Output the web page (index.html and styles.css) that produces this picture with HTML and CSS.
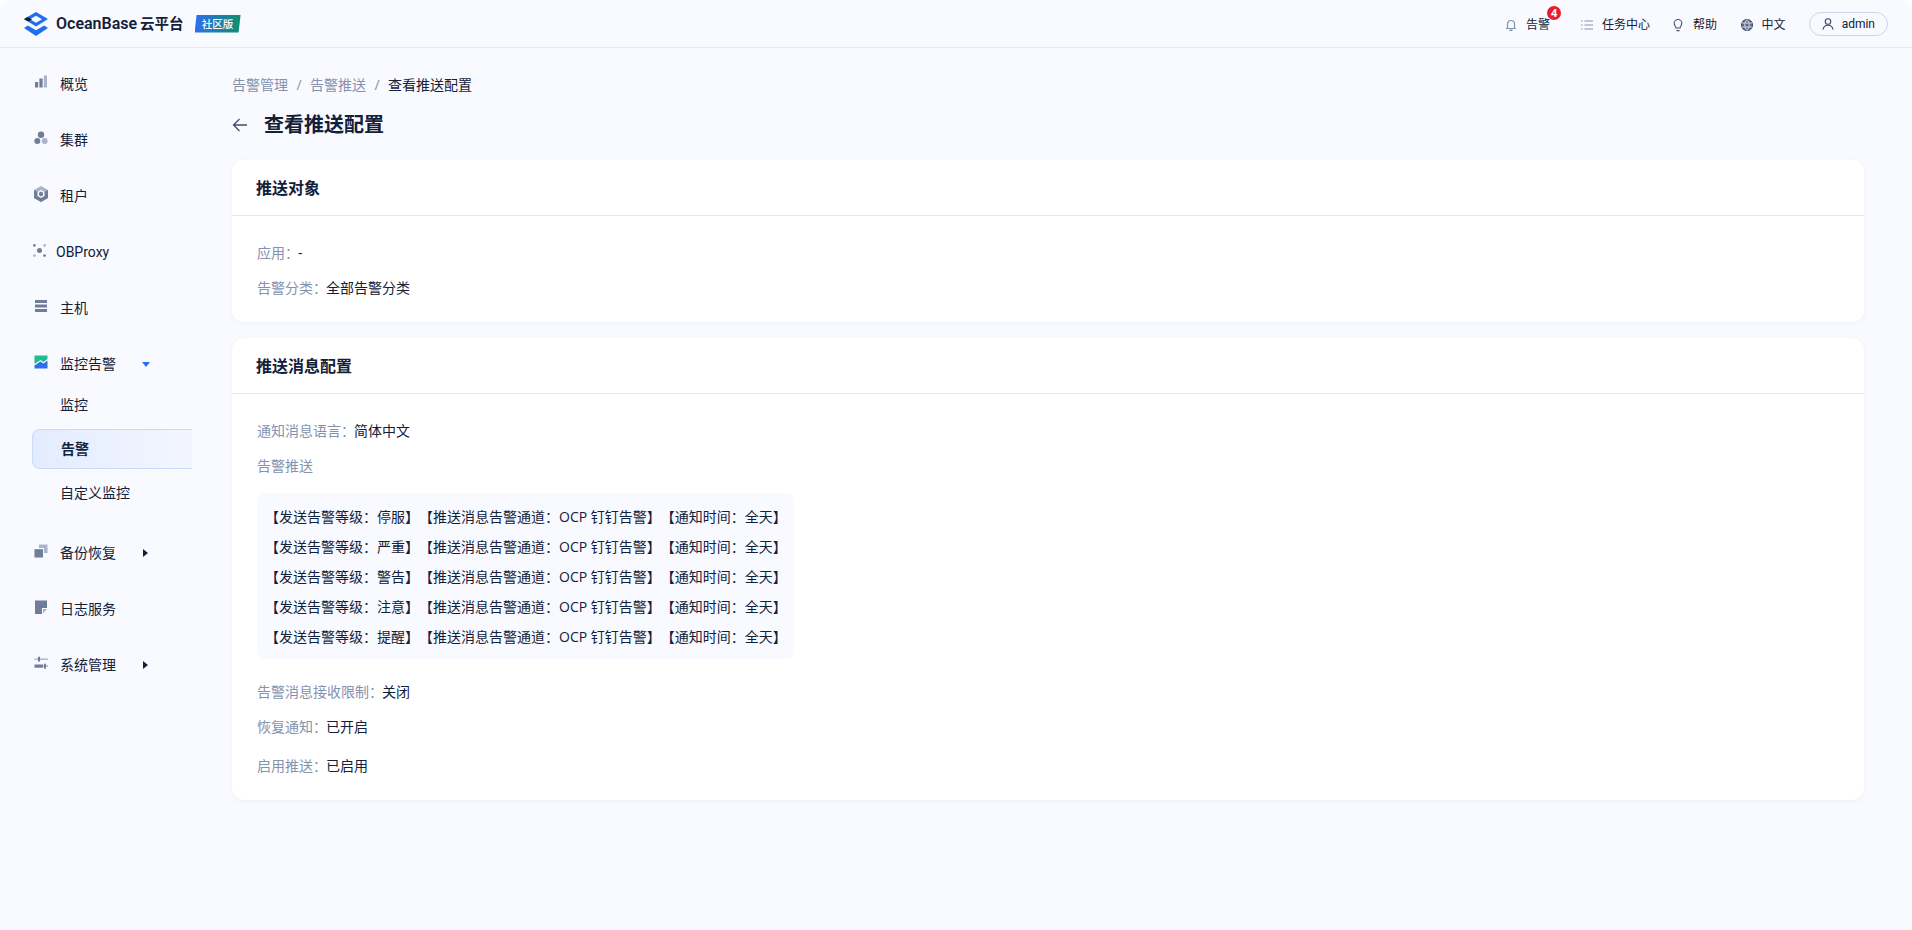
FILE: index.html
```html
<!DOCTYPE html>
<html lang="zh-CN">
<head>
<meta charset="utf-8">
<title>查看推送配置</title>
<link rel="stylesheet" href="styles.css">
</head>
<body>
<div class="app">
  <header class="topbar">
    <div class="brand">
      <svg class="logo" viewBox="0 0 24 24"><path fill="#1f6ff0" fill-rule="evenodd" d="M12 0 24 7 12 14.500 0 7ZM12 3.800 6 7.200 12 10.800 18 7.200Z"/><path fill="#0d1b33" d="M0 7.200 3.500 5 8 7.200 4.500 9.600Z"/><path fill="#1f6ff0" d="M0 16 3.800 13.500 12 18.200 20.200 13.500 24 16 12 24Z"/></svg>
      <span class="brand-name">OceanBase</span><span class="brand-cn">云平台</span>
      <span class="brand-tag">社区版</span>
    </div>
    <nav class="topnav">
      <a class="topnav-item topnav-alert">
        <svg class="ti" viewBox="0 0 14 14"><path fill="none" stroke="#8592ad" stroke-width="1.200" d="M3.500 10.500V6a3.500 3.500 0 0 1 7 0v4.500M2 10.500h10"/><path fill="#8592ad" d="M5.500 11.500h3V13h-3z"/></svg>
        <span>告警</span><b class="badge">4</b>
      </a>
      <a class="topnav-item topnav-tasks">
        <svg class="ti" viewBox="0 0 14 14"><path stroke="#8592ad" stroke-width="1" d="M1 3h1.600M4.400 3H13M1 7h1.600M4.400 7H13M1 11h1.600M4.400 11H13"/></svg>
        <span>任务中心</span>
      </a>
      <a class="topnav-item topnav-help">
        <svg class="ti" viewBox="0 0 14 14"><path fill="none" stroke="#3f4d68" stroke-width="1.100" d="M5 10c0-1.500-1.800-2.300-1.800-4.700a3.800 3.800 0 0 1 7.600 0C10.800 7.700 9 8.500 9 10ZM5.500 12.600h3"/></svg>
        <span>帮助</span>
      </a>
      <a class="topnav-item topnav-lang">
        <svg class="ti" viewBox="0 0 14 14"><circle cx="7" cy="7" r="5.600" fill="#5c6b8a" stroke="#3f4d68"/><path fill="none" stroke="#fff" stroke-width=".7" d="M1.500 5h11M1.500 9h11M7 1.500c-3 3.500-3 7.500 0 11M7 1.500c3 3.500 3 7.500 0 11"/></svg>
        <span>中文</span>
      </a>
      <a class="user-pill">
        <svg class="ti" viewBox="0 0 14 14"><circle cx="7" cy="4.500" r="2.800" fill="none" stroke="#3f4d68" stroke-width="1.100"/><path fill="none" stroke="#3f4d68" stroke-width="1.100" d="M2 12.800c.4-3 2.400-4.500 5-4.500s4.600 1.500 5 4.500"/></svg>
        <span>admin</span>
      </a>
    </nav>
  </header>

  <div class="body">
    <aside class="sidebar">
      <a class="menu-item">
        <svg class="mi" viewBox="0 0 14 14"><path fill="#6f7d99" d="M1 7h3.200v5.500H1z"/><path fill="#6f7d99" d="M5.400 3.500h3.200v9H5.400z"/><path fill="#aab4c8" d="M9.800 0.500H13v12H9.800z"/></svg>
        <span>概览</span>
      </a>
      <a class="menu-item">
        <svg class="mi" viewBox="0 0 14 14"><circle cx="7" cy="3.800" r="3.200" fill="#6f7d99"/><circle cx="3.300" cy="10" r="3" fill="#6f7d99"/><circle cx="10.700" cy="10" r="3" fill="#aab4c8"/></svg>
        <span>集群</span>
      </a>
      <a class="menu-item">
        <svg class="mi mi-tall" viewBox="0 0 14 16" preserveAspectRatio="none"><path fill="#aab4c8" d="M7 0 14 4V12L7 16 0 12V4Z"/><path fill="#6f7d99" d="M0 4 7 8v8L0 12ZM14 4V12L7 16V8Z"/><path fill="#f8faff" d="M7 4 10.500 6V10L7 12 3.500 10V6Z"/><path fill="#6f7d99" d="M7 5.600 9 6.800V9.200L7 10.400 5 9.200V6.800Z"/></svg>
        <span>租户</span>
      </a>
      <a class="menu-item menu-item-proxy">
        <svg class="mi" viewBox="0 0 14 14"><circle cx="7" cy="7" r="2.700" fill="#6f7d99"/><circle cx="1.500" cy="1.500" r="1.400" fill="#6f7d99"/><circle cx="12.500" cy="1.500" r="1.400" fill="#aab4c8"/><circle cx="1.500" cy="12.500" r="1.400" fill="#aab4c8"/><circle cx="12.500" cy="12.500" r="1.400" fill="#6f7d99"/></svg>
        <span>OBProxy</span>
      </a>
      <a class="menu-item">
        <svg class="mi" viewBox="0 0 14 14"><path fill="#6f7d99" d="M1 1h12v3H1zM1 5.500h12v3H1zM1 10h12v3H1z"/></svg>
        <span>主机</span>
      </a>
      <a class="menu-item menu-item-open">
        <svg class="mi" viewBox="0 0 14 14"><path fill="#1fbf8a" d="M.5 .5h13v3.500L9.500 7 6.500 5 .5 9Z"/><path fill="#2f6fed" d="M.5 10.500 6.500 6.500 9.500 8.500 13.500 5.500V13.500H.5Z"/></svg>
        <span>监控告警</span>
        <i class="caret-down"></i>
      </a>
      <div class="submenu">
        <a class="sub-item">监控</a>
        <a class="sub-item sub-item-active">告警</a>
        <a class="sub-item">自定义监控</a>
      </div>
      <a class="menu-item">
        <svg class="mi" viewBox="0 0 14 14"><path fill="#aab4c8" d="M5 .5h8.500V9H10V4H5Z"/><path fill="#6f7d99" d="M.5 5.200h8.500v8.300H.5z"/></svg>
        <span>备份恢复</span>
        <i class="caret-right"></i>
      </a>
      <a class="menu-item">
        <svg class="mi" viewBox="0 0 14 14"><path fill="#6f7d99" d="M1 .5h12V8H8v6H1Z"/><path fill="#aab4c8" d="M9 9h4l-4 4.500Z"/></svg>
        <span>日志服务</span>
      </a>
      <a class="menu-item">
        <svg class="mi" viewBox="0 0 14 14"><path fill="#aab4c8" d="M.5 2.500H14v1.400H.5z"/><path fill="#6f7d99" d="M4 .8h2v4.800H4z"/><path fill="#6f7d99" d="M.5 8.500h8.500v3.200H.5z"/><path fill="#aab4c8" d="M9 9.300h5v1.500H9z"/><path fill="#6f7d99" d="M10 7.800h1.900v5H10z"/></svg>
        <span>系统管理</span>
        <i class="caret-right"></i>
      </a>
    </aside>

    <main class="content">
      <div class="crumbs">
        <a>告警管理</a><i>/</i><a>告警推送</a><i>/</i><span>查看推送配置</span>
      </div>
      <div class="page-head">
        <svg class="back" viewBox="0 0 16 16"><path fill="none" stroke="#3f4d68" stroke-width="1.300" d="M15 8H1.800M7.500 2 1.500 8l6 6"/></svg>
        <h1>查看推送配置</h1>
      </div>

      <section class="card card-target">
        <h2>推送对象</h2>
        <div class="card-body">
          <div class="field"><label>应用：</label><span>-</span></div>
          <div class="field"><label>告警分类：</label><span>全部告警分类</span></div>
        </div>
      </section>

      <section class="card card-message">
        <h2>推送消息配置</h2>
        <div class="card-body">
          <div class="field"><label>通知消息语言：</label><span>简体中文</span></div>
          <div class="field"><label>告警推送</label></div>
          <div class="rules">
            <div class="rule"><span>【发送告警等级：停服】</span><span>【推送消息告警通道：OCP 钉钉告警】</span><span>【通知时间：全天】</span></div>
            <div class="rule"><span>【发送告警等级：严重】</span><span>【推送消息告警通道：OCP 钉钉告警】</span><span>【通知时间：全天】</span></div>
            <div class="rule"><span>【发送告警等级：警告】</span><span>【推送消息告警通道：OCP 钉钉告警】</span><span>【通知时间：全天】</span></div>
            <div class="rule"><span>【发送告警等级：注意】</span><span>【推送消息告警通道：OCP 钉钉告警】</span><span>【通知时间：全天】</span></div>
            <div class="rule"><span>【发送告警等级：提醒】</span><span>【推送消息告警通道：OCP 钉钉告警】</span><span>【通知时间：全天】</span></div>
          </div>
          <div class="field"><label>告警消息接收限制：</label><span>关闭</span></div>
          <div class="field"><label>恢复通知：</label><span>已开启</span></div>
          <div class="field field-last"><label>启用推送：</label><span>已启用</span></div>
        </div>
      </section>
    </main>
  </div>
</div>
</body>
</html>
```
FILE: styles.css
```css
* { box-sizing: border-box; }
html, body { margin: 0; height: 100%; background: #fff; }
body {
  font-family: "Open Sans", "Noto Sans CJK SC", sans-serif;
  font-size: 14px;
  line-height: 20px;
  color: #132039;
  overflow: hidden;
}
a { color: inherit; text-decoration: none; }

.app { height: 930px; background: #f8faff; border-radius: 12px 12px 0 0; overflow: hidden; display: flex; flex-direction: column; }

.topbar {
  flex: none;
  height: 48px;
  border-bottom: 1px solid #e2e8f3;
  display: flex;
  align-items: center;
  justify-content: space-between;
  padding: 0 24px;
}
.brand { display: flex; align-items: center; }
.logo { width: 24px; height: 24px; margin-right: 8px; }
.brand-name { font-family: Roboto, sans-serif; font-size: 16px; font-weight: 600; line-height: 24px; }
.brand-cn { font-size: 14.500px; font-weight: 600; line-height: 24px; margin-left: 3px; }
.brand-tag {
  margin-left: 11px;
  width: 46px;
  height: 18px;
  font-size: 10.500px;
  line-height: 18px;
  font-weight: 500;
  color: #fff;
  text-align: center;
  background: linear-gradient(90deg, #2f6fed, #0e8f6e);
  clip-path: polygon(2px 0, 100% 0, calc(100% - 2px) 100%, 0 100%);
}

.topnav { display: flex; align-items: center; font-size: 12px; margin-top: 1px; }
.topnav-item { display: flex; align-items: center; position: relative; padding-top: 2px; }
.ti { width: 14px; height: 14px; flex: none; margin-right: 8px; }
.topnav-alert { margin-right: 30px; }
.topnav-tasks { margin-right: 21px; }
.topnav-help { margin-right: 22.500px; }
.topnav-lang { margin-right: 23px; }
.badge {
  position: absolute;
  right: -11px;
  top: -7.500px;
  width: 14px;
  height: 14px;
  border-radius: 50%;
  background: #eb1c2d;
  color: #fff;
  font-size: 11px;
  line-height: 14px;
  font-weight: 700;
  text-align: center;
}
.user-pill {
  display: flex;
  align-items: center;
  height: 24px;
  padding: 0 12px 0 11px;
  border: 1px solid #cdd5e4;
  border-radius: 12px;
  font-family: Roboto, sans-serif;
}
.user-pill .ti { margin-right: 7px; }

.body { flex: 1; display: flex; min-height: 0; }
.sidebar { flex: none; width: 232px; padding: 8px 0 0 32px; }
.menu-item {
  display: flex;
  align-items: center;
  height: 56px;
  padding-left: 2px;
  position: relative;
}
.menu-item span { margin-left: 12px; }
.menu-item-proxy { font-family: Roboto, sans-serif; }
.menu-item-proxy span { margin-left: 10px; }
.menu-item-proxy .mi { width: 13px; height: 13px; margin-left: -1px; }
.mi { width: 14px; height: 14px; flex: none; margin-top: -4px; }
.mi-tall { height: 16px; }
.caret-down, .caret-right { position: absolute; width: 0; height: 0; }
.caret-down { left: 110px; border-left: 4px solid transparent; border-right: 4px solid transparent; border-top: 5px solid #2f6fed; }
.caret-right { left: 111px; border-top: 4px solid transparent; border-bottom: 4px solid transparent; border-left: 5px solid #132039; }

.submenu { margin-top: -9px; margin-bottom: 10px; }
.sub-item { display: block; height: 44px; line-height: 44px; padding-left: 28px; }
.sub-item-active {
  width: 160px;
  height: 40px;
  line-height: 38px;
  margin: 2px 0;
  font-weight: 600;
  border: 1px solid #cbdaf9;
  border-right: 0;
  border-radius: 8px 0 0 8px;
  background: linear-gradient(90deg, #e3ecfe, #f3f6ff);
}

.content { flex: 1; min-width: 0; padding: 27px 48px 0 0; }
.crumbs { display: flex; align-items: center; height: 20px; color: #8592ad; }
.crumbs i { font-style: normal; width: 6px; text-align: center; margin: 0 8px; }
.crumbs span { color: #132039; }
.page-head { display: flex; align-items: center; height: 32px; margin-top: 14px; }
.back { width: 16px; height: 16px; margin-right: 16px; }
h1 { margin: 0; font-size: 20px; line-height: 28px; font-weight: 600; }

.card {
  background: #fff;
  border-radius: 12px;
  box-shadow: 0 1px 4px rgba(54, 69, 99, .06);
}
.card-target { margin-top: 19px; height: 162px; }
.card-message { margin-top: 16px; height: 462px; }
.card h2 {
  margin: 0;
  height: 56px;
  padding: 0 24px;
  font-size: 16px;
  font-weight: 600;
  line-height: 57px;
  border-bottom: 1px solid #e2e8f3;
}
.card-body { padding: 27px 25px 0; }
.field { display: flex; height: 20px; margin-bottom: 15px; }
.field label { color: #8592ad; margin-right: -1px; }
.rules {
  width: 537px;
  height: 166px;
  margin: 17px 0 23px;
  padding: 9px 0 0 8px;
  background: #f8faff;
  border-radius: 8px;
  white-space: nowrap;
}
.rule { display: flex; height: 30px; line-height: 30px; }
.field-last { margin-top: 19px; }
```
